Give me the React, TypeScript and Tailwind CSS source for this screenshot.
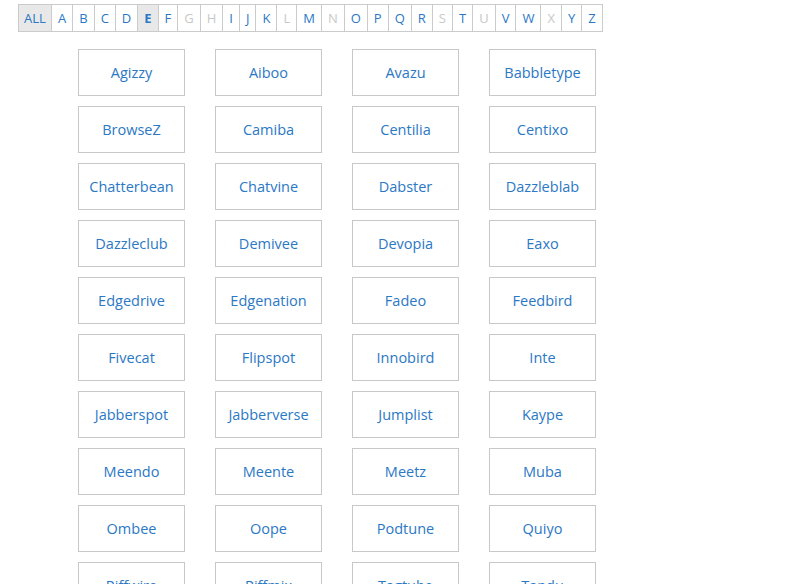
const letters = [
  { l: 'A', on: true },
  { l: 'B', on: true },
  { l: 'C', on: true },
  { l: 'D', on: true },
  { l: 'E', on: true, active: true },
  { l: 'F', on: true },
  { l: 'G', on: false },
  { l: 'H', on: false },
  { l: 'I', on: true },
  { l: 'J', on: true },
  { l: 'K', on: true },
  { l: 'L', on: false },
  { l: 'M', on: true },
  { l: 'N', on: false },
  { l: 'O', on: true },
  { l: 'P', on: true },
  { l: 'Q', on: true },
  { l: 'R', on: true },
  { l: 'S', on: false },
  { l: 'T', on: true },
  { l: 'U', on: false },
  { l: 'V', on: true },
  { l: 'W', on: true },
  { l: 'X', on: false },
  { l: 'Y', on: true },
  { l: 'Z', on: true },
];

const companies = [
  'Agizzy', 'Aiboo', 'Avazu', 'Babbletype',
  'BrowseZ', 'Camiba', 'Centilia', 'Centixo',
  'Chatterbean', 'Chatvine', 'Dabster', 'Dazzleblab',
  'Dazzleclub', 'Demivee', 'Devopia', 'Eaxo',
  'Edgedrive', 'Edgenation', 'Fadeo', 'Feedbird',
  'Fivecat', 'Flipspot', 'Innobird', 'Inte',
  'Jabberspot', 'Jabberverse', 'Jumplist', 'Kaype',
  'Meendo', 'Meente', 'Meetz', 'Muba',
  'Ombee', 'Oope', 'Podtune', 'Quiyo',
  'Riffwire', 'Riffmix', 'Tagtube', 'Tandu',
];

function AlphaBar() {
  return (
    <div className="flex h-[28px] w-fit border border-[#cbcbcb] text-[13px] leading-none">
      <button
        type="button"
        className="flex items-center justify-center w-[33px] bg-[#e8e8e8] text-[#2b78c5] border-r border-[#cbcbcb]"
      >
        ALL
      </button>
      {letters.map((x, i) => (
        <button
          type="button"
          key={x.l}
          className={
            'flex items-center justify-center px-[6px] ' +
            (i < letters.length - 1 ? 'border-r border-[#cbcbcb] ' : '') +
            (x.active ? 'bg-[#e8e8e8] font-bold ' : '') +
            (x.on ? 'text-[#2b78c5]' : 'text-[#c8c8c8]')
          }
        >
          {x.l}
        </button>
      ))}
    </div>
  );
}

export default function App() {
  return (
    <div
      className="min-h-screen bg-white pt-[4px] pl-[18px] overflow-hidden"
      style={{ fontFamily: '"Open Sans", "Noto Sans", sans-serif' }}
    >
      <AlphaBar />
      <div className="grid grid-cols-[repeat(4,107px)] gap-x-[30px] gap-y-[10px] mt-[17px] ml-[60px]">
        {companies.map((c) => (
          <a
            key={c}
            href="#"
            className="flex items-center justify-center h-[47px] border border-[#c8c8c8] text-[14.5px] text-[#2b78c5]"
          >
            {c}
          </a>
        ))}
      </div>
    </div>
  );
}
